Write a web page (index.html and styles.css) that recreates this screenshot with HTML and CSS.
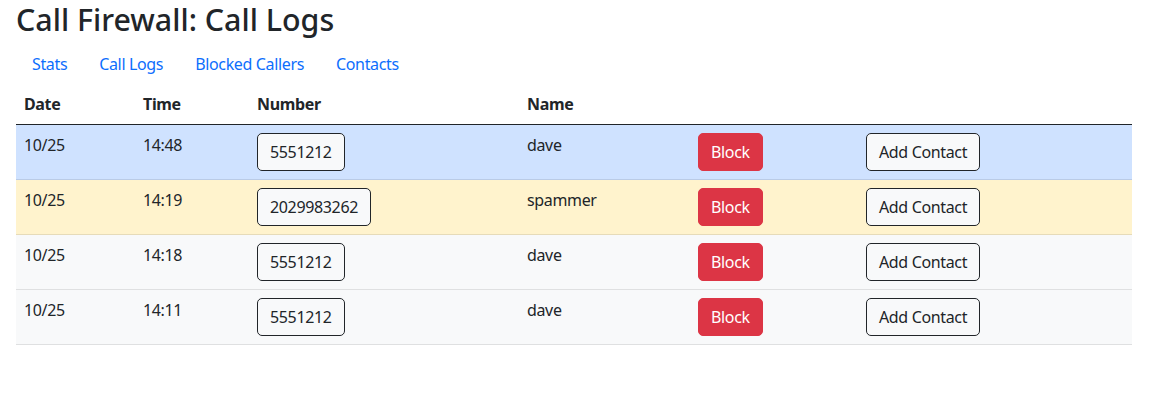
FILE: index.html
```html
<!DOCTYPE html>
<html lang="en">
<head>
<meta charset="utf-8">
<title>Call Firewall: Call Logs</title>
<link rel="stylesheet" href="styles.css">
</head>
<body>
<div class="page">
  <h1 class="title">Call Firewall: Call Logs</h1>
  <nav class="nav">
    <a class="nav-link" href="#">Stats</a>
    <a class="nav-link" href="#">Call Logs</a>
    <a class="nav-link" href="#">Blocked Callers</a>
    <a class="nav-link" href="#">Contacts</a>
  </nav>
  <table class="logs">
    <colgroup>
      <col class="c-date"><col class="c-time"><col class="c-num"><col class="c-name"><col class="c-block"><col class="c-add">
    </colgroup>
    <thead>
      <tr><th>Date</th><th>Time</th><th>Number</th><th>Name</th><th></th><th></th></tr>
    </thead>
    <tbody>
      <tr class="row-primary">
        <td>10/25</td><td>14:48</td>
        <td><button class="btn btn-light">5551212</button></td>
        <td>dave</td>
        <td><button class="btn btn-danger">Block</button></td>
        <td><button class="btn btn-light">Add Contact</button></td>
      </tr>
      <tr class="row-warning">
        <td>10/25</td><td>14:19</td>
        <td><button class="btn btn-light">2029983262</button></td>
        <td>spammer</td>
        <td><button class="btn btn-danger">Block</button></td>
        <td><button class="btn btn-light">Add Contact</button></td>
      </tr>
      <tr class="row-light">
        <td>10/25</td><td>14:18</td>
        <td><button class="btn btn-light">5551212</button></td>
        <td>dave</td>
        <td><button class="btn btn-danger">Block</button></td>
        <td><button class="btn btn-light">Add Contact</button></td>
      </tr>
      <tr class="row-light">
        <td>10/25</td><td>14:11</td>
        <td><button class="btn btn-light">5551212</button></td>
        <td>dave</td>
        <td><button class="btn btn-danger">Block</button></td>
        <td><button class="btn btn-light">Add Contact</button></td>
      </tr>
    </tbody>
  </table>
</div>
</body>
</html>
```

FILE: styles.css
```css
* { box-sizing: border-box; }
html, body { margin: 0; padding: 0; background: #fff; }
body {
  font-family: "Noto Sans", "Open Sans", "Liberation Sans", sans-serif;
  font-size: 16px;
  line-height: 24px;
  letter-spacing: -0.35px;
  color: #212529;
}
.page { padding: 0 32px 0 16px; }
.title {
  margin: 0 0 6px;
  padding-top: 2px;
  font-size: 30.4px;
  line-height: 36px;
  font-weight: 500;
  letter-spacing: 0;
}
.nav { display: flex; }
.nav-link {
  display: block;
  padding: 8px 16px;
  color: #0d6efd;
  text-decoration: none;
}
.logs {
  width: 1116px;
  border-collapse: collapse;
  table-layout: fixed;
}
.c-date { width: 119px; }
.c-time { width: 114px; }
.c-num { width: 270px; }
.c-name { width: 171px; }
.c-block { width: 168px; }
.c-add { width: 274px; }
.logs th, .logs td {
  padding: 8px;
  text-align: left;
  vertical-align: top;
}
.logs th {
  font-weight: 700;
  border-bottom: 1px solid #212529;
}
.logs td { border-bottom: 1px solid #dee2e6; }
.row-primary td { background: #cfe2ff; border-bottom-color: #bacbe6; }
.row-warning td { background: #fff3cd; border-bottom-color: #e6dbb9; }
.row-light td { background: #f8f9fa; border-bottom-color: #dfe0e1; }
.btn {
  display: inline-block;
  font-family: inherit;
  font-size: 16px;
  line-height: 24px;
  letter-spacing: -0.35px;
  padding: 6px 12px;
  border-radius: 5px;
  border: 1px solid #212529;
  cursor: pointer;
}
.btn-light { background: #f8f9fa; color: #212529; }
.btn-danger { background: #dc3545; border-color: #dc3545; color: #fff; }
```
